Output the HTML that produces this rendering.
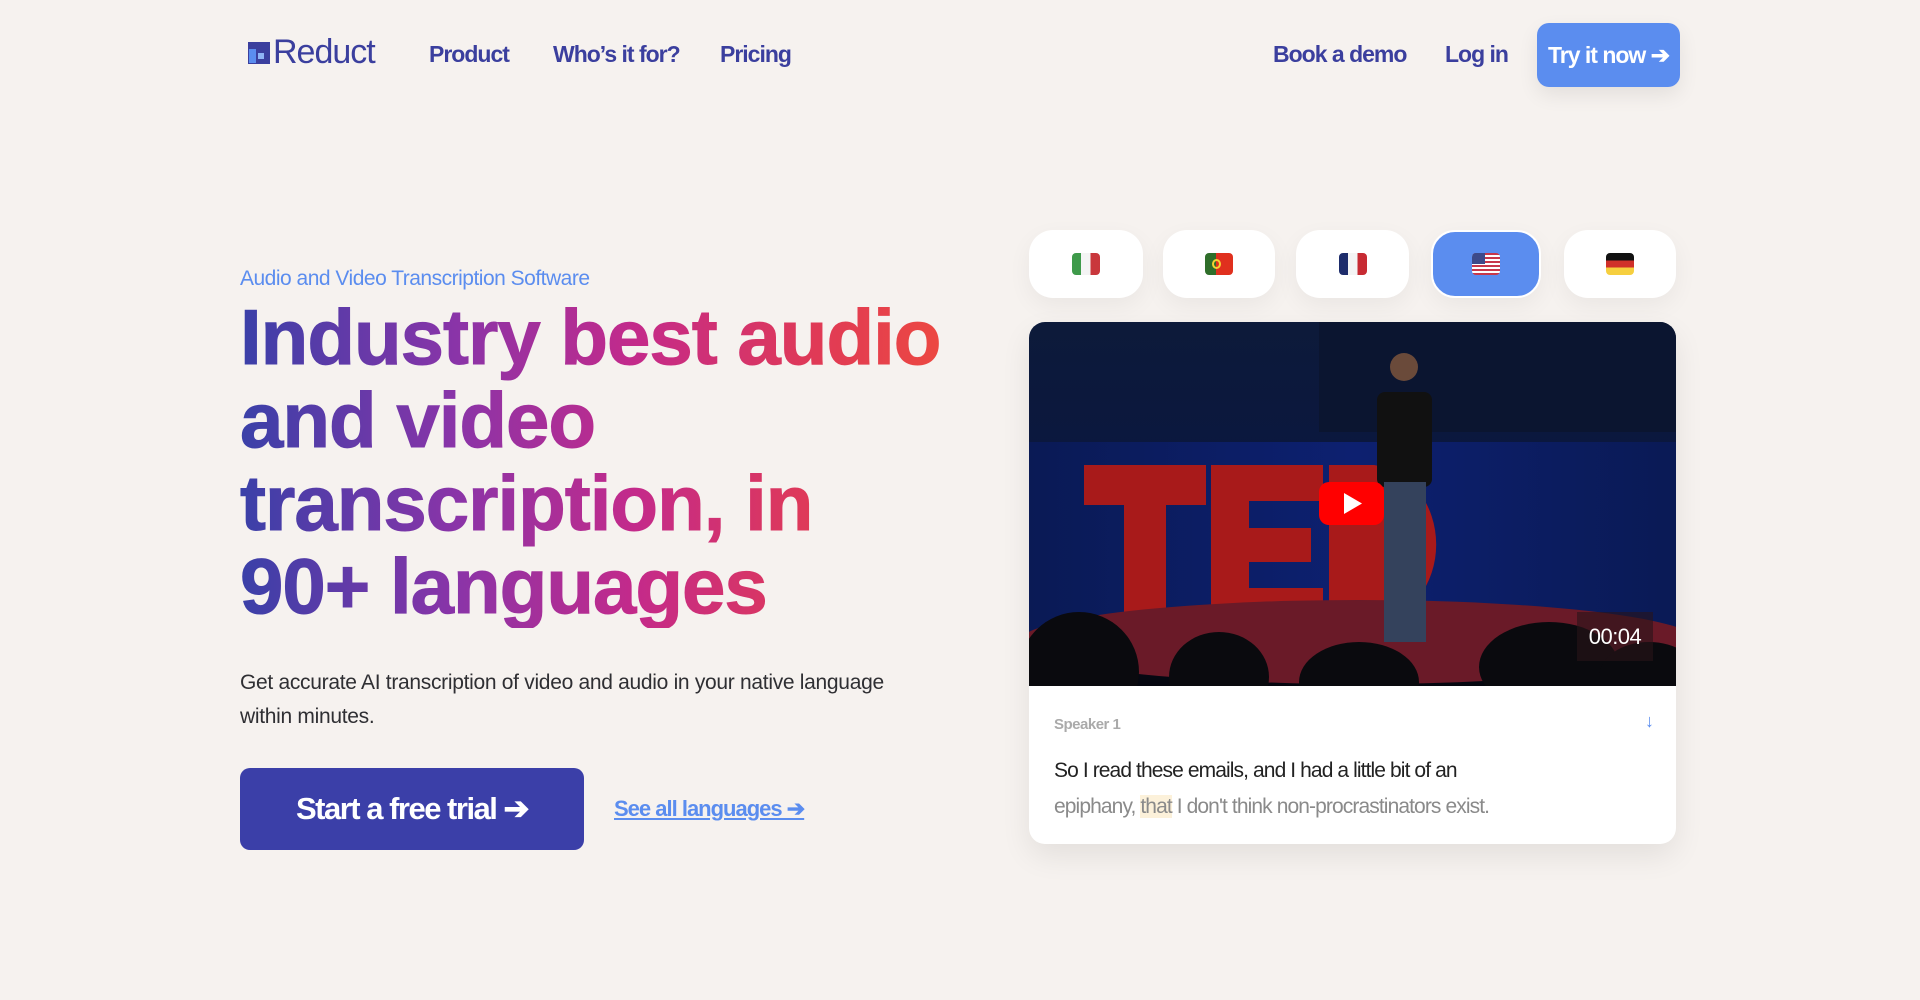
<!DOCTYPE html>
<html><head><meta charset="utf-8"><style>
*{margin:0;padding:0;box-sizing:border-box}
body{width:1920px;height:1000px;background:#f6f2ef;font-family:"Liberation Sans",sans-serif;position:relative;overflow:hidden}
.a{position:absolute;white-space:nowrap}
.nav{font-size:23px;font-weight:bold;color:#3b3f9e;letter-spacing:-1px;top:41px}
h1{position:absolute;left:240px;top:296px;font-size:78px;line-height:83px;font-weight:bold;letter-spacing:-1px;background:linear-gradient(90deg,#3a40a8 0%,#8a34a8 30%,#c42a8a 55%,#e03a56 80%,#ee4a3e 100%);-webkit-background-clip:text;background-clip:text;color:transparent;width:720px;-webkit-text-stroke:1px transparent}
.pill{position:absolute;top:230px;height:68px;background:#fff;border-radius:24px;box-shadow:0 8px 24px rgba(0,0,0,0.05)}
.flag{position:absolute;left:50%;top:50%;width:28px;height:22px;margin:-11px 0 0 -14px;border-radius:4px;overflow:hidden}
</style></head><body>

<svg class="a" style="left:248px;top:42px" width="22" height="22" viewBox="0 0 22 22">
<rect width="22" height="22" fill="#3b3f9e"/>
<rect x="1" y="7" width="7" height="14" fill="#5b8def"/>
<rect x="10" y="11" width="6" height="6" fill="#8fb4f5"/>
</svg>
<div class="a" style="left:273px;top:33px;font-size:34px;color:#3b3f9e;letter-spacing:-1px">Reduct</div>

<div class="a nav" style="left:429px">Product</div>
<div class="a nav" style="left:553px">Who’s it for?</div>
<div class="a nav" style="left:720px">Pricing</div>
<div class="a nav" style="left:1273px">Book a demo</div>
<div class="a nav" style="left:1445px">Log in</div>
<div class="a" style="left:1537px;top:23px;width:143px;height:64px;background:#5b8def;border-radius:12px;box-shadow:0 8px 20px rgba(0,0,0,0.08);color:#fff;font-size:23px;font-weight:bold;letter-spacing:-1px;line-height:64px;text-align:center">Try it now ➔</div>

<div class="a" style="left:240px;top:267px;font-size:21px;color:#5b8def;letter-spacing:-0.5px">Audio and Video Transcription Software</div>
<h1>Industry best audio and video transcription, in 90+ languages</h1>

<div class="a" style="left:240px;top:666px;font-size:21px;line-height:34px;color:#2f2f33;white-space:normal;width:700px;letter-spacing:-0.3px">Get accurate AI transcription of video and audio in your native language within minutes.</div>

<div class="a" style="left:240px;top:768px;width:344px;height:82px;background:#3b3fa8;border-radius:10px;color:#fff;font-size:31px;font-weight:bold;letter-spacing:-1.5px;line-height:82px;text-align:center">Start a free trial ➔</div>
<div class="a" style="left:614px;top:796px;font-size:22px;font-weight:bold;color:#5b8def;text-decoration:underline;letter-spacing:-1px">See all languages ➔</div>

<div class="pill" style="left:1029px;width:114px"><div class="flag" style="background:linear-gradient(90deg,#3e9a4a 33%,#f4f4f4 33% 66%,#c9373c 66%)"></div></div>
<div class="pill" style="left:1163px;width:112px"><div class="flag" style="background:linear-gradient(90deg,#2f6e2a 40%,#e0301e 40%)"><div style="position:absolute;left:7px;top:6px;width:9px;height:10px;border:2px solid #f5d431;border-radius:50%"></div></div></div>
<div class="pill" style="left:1296px;width:113px"><div class="flag" style="background:linear-gradient(90deg,#1d2c6b 33%,#f4f4f4 33% 66%,#c72b33 66%)"></div></div>
<div class="pill" style="left:1431px;width:110px;background:#5b8def;border:2px solid #fff"><div class="flag" style="background:repeating-linear-gradient(180deg,#c7374a 0 2px,#fff 2px 4px)"><div style="position:absolute;left:0;top:0;width:13px;height:11px;background:#3c4a8a"></div></div></div>
<div class="pill" style="left:1564px;width:112px"><div class="flag" style="background:linear-gradient(180deg,#111 33%,#d0302a 33% 66%,#f6cf3f 66%)"></div></div>

<div class="a" style="left:1029px;top:322px;width:647px;height:522px;background:#fff;border-radius:16px;overflow:hidden;box-shadow:0 12px 30px rgba(0,0,0,0.08)">
<svg width="647" height="364" viewBox="0 0 647 364" style="display:block">
<defs>
<linearGradient id="bg" x1="0" y1="0" x2="0" y2="1"><stop offset="0" stop-color="#0d1a3a"/><stop offset="0.5" stop-color="#0a1640"/><stop offset="1" stop-color="#05070f"/></linearGradient>
<linearGradient id="cur" x1="0" y1="0" x2="1" y2="0"><stop offset="0" stop-color="#0a1a55"/><stop offset="0.5" stop-color="#0d2070"/><stop offset="1" stop-color="#0a1a55"/></linearGradient>
</defs>
<rect width="647" height="364" fill="url(#bg)"/>
<rect x="290" y="0" width="357" height="110" fill="#0b1530"/>
<rect x="0" y="120" width="647" height="200" fill="url(#cur)"/>
<g fill="#a81a1a">
<rect x="55" y="143" width="122" height="40"/><rect x="95" y="143" width="42" height="159"/>
<rect x="182" y="143" width="38" height="159"/><rect x="182" y="143" width="112" height="36"/><rect x="182" y="206" width="100" height="34"/><rect x="182" y="266" width="112" height="36"/>
<path d="M300 143h45a70 80 0 0 1 0 159h-45z"/>
</g>
<ellipse cx="330" cy="320" rx="340" ry="42" fill="#6a1a28"/>
<rect x="348" y="70" width="55" height="95" fill="#111" rx="8"/>
<circle cx="375" cy="45" r="14" fill="#6a4a3a"/>
<rect x="355" y="160" width="42" height="160" fill="#34425c"/>
<g fill="#0a0a0e">
<ellipse cx="50" cy="350" rx="60" ry="60"/><ellipse cx="190" cy="355" rx="50" ry="45"/><ellipse cx="330" cy="360" rx="60" ry="40"/><ellipse cx="520" cy="345" rx="70" ry="45"/><ellipse cx="620" cy="355" rx="50" ry="35"/>
</g>
<rect x="290" y="160" width="65" height="43" rx="10" fill="#f00"/>
<path d="M315 171v21l18-10.5z" fill="#fff"/>
<rect x="548" y="290" width="76" height="49" fill="rgba(40,20,25,0.6)"/>
<text x="586" y="322" fill="#fff" font-family="Liberation Sans" font-size="22" text-anchor="middle" letter-spacing="-0.5">00:04</text>
</svg>
<div class="a" style="left:25px;top:394px;font-size:15px;font-weight:bold;color:#aaa;letter-spacing:-0.5px">Speaker 1</div>
<div class="a" style="left:616px;top:389px;font-size:18px;color:#5b8def">↓</div>
<div class="a" style="left:25px;top:437px;font-size:21px;color:#222;letter-spacing:-0.9px">So I read these emails, and I had a little bit of an</div>
<div class="a" style="left:25px;top:473px;font-size:21px;color:#8a8a8a;letter-spacing:-0.9px">epiphany, <span style="background:#fcf1da">that</span> I don't think non-procrastinators exist.</div>
</div>
</body></html>
